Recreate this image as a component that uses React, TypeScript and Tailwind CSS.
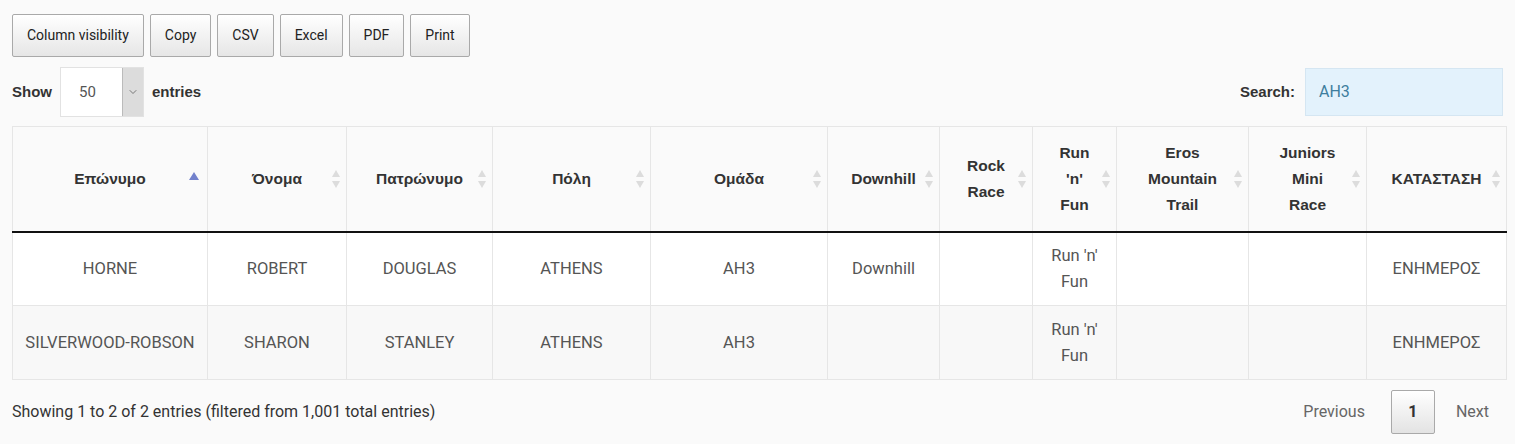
import { ChevronDown } from "lucide-react";

const columns = [
  { label: ["Επώνυμο"], w: "w-[195px]", active: true },
  { label: ["Όνομα"], w: "w-[139px]" },
  { label: ["Πατρώνυμο"], w: "w-[146px]" },
  { label: ["Πόλη"], w: "w-[158px]" },
  { label: ["Ομάδα"], w: "w-[177px]" },
  { label: ["Downhill"], w: "w-[112px]" },
  { label: ["Rock", "Race"], w: "w-[93px]" },
  { label: ["Run", "'n'", "Fun"], w: "w-[84px]" },
  { label: ["Eros", "Mountain", "Trail"], w: "w-[132px]" },
  { label: ["Juniors", "Mini", "Race"], w: "w-[118px]" },
  { label: ["ΚΑΤΑΣΤΑΣΗ"], w: "w-[140px]" },
];

const rows = [
  ["HORNE", "ROBERT", "DOUGLAS", "ATHENS", "AH3", "Downhill", "", ["Run 'n'", "Fun"], "", "", "ΕΝΗΜΕΡΟΣ"],
  ["SILVERWOOD-ROBSON", "SHARON", "STANLEY", "ATHENS", "AH3", "", "", ["Run 'n'", "Fun"], "", "", "ΕΝΗΜΕΡΟΣ"],
];

const buttons = ["Column visibility", "Copy", "CSV", "Excel", "PDF", "Print"];

function SortIcon({ active }: { active?: boolean }) {
  if (active) {
    return (
      <svg width="10" height="8" viewBox="0 0 10 8" className="absolute right-[8px] top-[45px]">
        <path d="M5 0 L10 8 L0 8 Z" fill="#7281cc" />
      </svg>
    );
  }
  return (
    <svg width="8" height="20" viewBox="0 0 8 20" className="absolute right-[6px] top-1/2 -translate-y-1/2">
      <path d="M4 1 L8 8 L0 8 Z" fill="#dcdcdc" />
      <path d="M4 19 L8 12 L0 12 Z" fill="#dcdcdc" />
    </svg>
  );
}

export default function App() {
  return (
    <div className="min-h-[444px] bg-[#fafafa] px-[12px] pt-[14px] font-['Roboto',sans-serif] text-[#333]">
      <div className="flex gap-[6px]">
        {buttons.map((b) => (
          <button
            key={b}
            className="h-[43px] px-[14px] text-[14px] text-[#222] rounded-[2px] border border-[#a9a9a9] bg-gradient-to-b from-white to-[#e6e6e6]"
          >
            {b}
          </button>
        ))}
      </div>

      <div className="flex items-center justify-between mt-[10px] h-[50px]">
        <div className="flex items-center font-['Liberation_Sans',sans-serif] font-bold text-[15px]">
          <span>Show</span>
          <div className="ml-[8px] mr-[8px] flex h-[50px] w-[84px] border border-[#e2e2e2] bg-white">
            <span className="flex-1 flex items-center pl-[18px] font-['Roboto',sans-serif] font-normal text-[15px] text-[#555]">50</span>
            <span className="w-[21px] bg-[#dcdcdc] border-l border-[#bbb] flex items-center justify-center">
              <ChevronDown size={12} strokeWidth={1.5} className="text-[#555]" />
            </span>
          </div>
          <span>entries</span>
        </div>
        <div className="flex items-center">
          <span className="font-['Liberation_Sans',sans-serif] font-bold text-[15px] mr-[10px]">Search:</span>
          <div className="w-[198px] h-[48px] bg-[#e3f2fc] border border-[#d5e6f2] flex items-center pl-[13px] text-[16px] text-[#3e7e9e]">
            AH3
          </div>
        </div>
      </div>

      <table className="table-fixed border-collapse w-[1494px] mt-[9px] border border-[#e6e6e6]">
        <thead>
          <tr className="h-[105px] bg-[#fafafa]">
            {columns.map((c, i) => (
              <th
                key={i}
                className={`${c.w} relative border-x border-[#e6e6e6] border-b-2 border-b-[#111] px-[8px] font-['Liberation_Sans',sans-serif] font-bold text-[15.5px] leading-[26px] text-[#333]`}
              >
                {c.label.map((l, j) => (
                  <div key={j}>{l}</div>
                ))}
                <SortIcon active={c.active} />
              </th>
            ))}
          </tr>
        </thead>
        <tbody>
          {rows.map((r, i) => (
            <tr key={i} className={`h-[74px] ${i % 2 === 0 ? "bg-white" : "bg-[#f8f8f8]"}`}>
              {r.map((cell, j) => (
                <td
                  key={j}
                  className="border border-[#e6e6e6] text-center text-[16.5px] leading-[26px] text-[#555] px-[4px]"
                >
                  {Array.isArray(cell) ? cell.map((l, k) => <div key={k}>{l}</div>) : cell}
                </td>
              ))}
            </tr>
          ))}
        </tbody>
      </table>

      <div className="flex items-center justify-between mt-[10px]">
        <span className="text-[16px] text-[#333]">Showing 1 to 2 of 2 entries (filtered from 1,001 total entries)</span>
        <div className="flex items-center text-[16px] text-[#666]">
          <span className="mr-[26px]">Previous</span>
          <span className="w-[44px] h-[44px] flex items-center justify-center border border-[#a9a9a9] rounded-[2px] bg-gradient-to-b from-white to-[#e3e3e3] font-bold text-[#333]">1</span>
          <span className="ml-[21px] mr-[14px]">Next</span>
        </div>
      </div>
    </div>
  );
}
